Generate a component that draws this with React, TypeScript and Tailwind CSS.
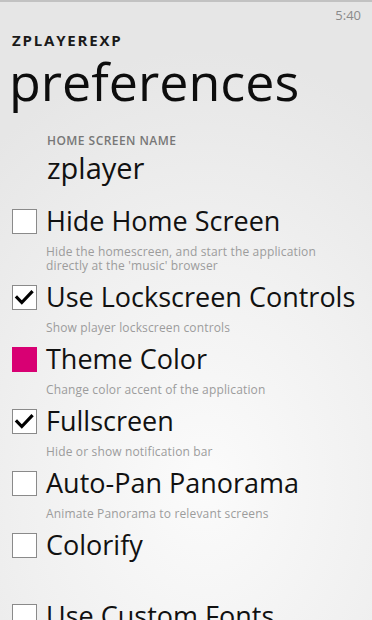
import React from "react";

const font = { fontFamily: '"Open Sans", "Noto Sans", sans-serif' };

function Check() {
  return (
    <svg width="25" height="25" viewBox="0 0 25 25" className="block">
      <polyline points="5,12.5 9.8,17.5 19.5,7.2" fill="none" stroke="#000" strokeWidth="3.2" strokeLinecap="square" strokeLinejoin="miter" />
    </svg>
  );
}

type Row = { title: string; desc?: string[]; kind: "on" | "off" | "color"; extra?: string };

const rows: Row[] = [
  { title: "Hide Home Screen", desc: ["Hide the homescreen, and start the application", "directly at the 'music' browser"], kind: "off" },
  { title: "Use Lockscreen Controls", desc: ["Show player lockscreen controls"], kind: "on" },
  { title: "Theme Color", desc: ["Change color accent of the application"], kind: "color" },
  { title: "Fullscreen", desc: ["Hide or show notification bar"], kind: "on" },
  { title: "Auto-Pan Panorama", desc: ["Animate Panorama to relevant screens"], kind: "off" },
  { title: "Colorify", kind: "off", extra: "pb-[39px]" },
  { title: "Use Custom Fonts", kind: "off" },
];

export default function App() {
  return (
    <div
      style={font}
      className="w-[372px] h-[620px] overflow-hidden bg-[radial-gradient(ellipse_90%_70%_at_55%_78%,#fbfbfb_0%,#f0f0f0_55%,#e6e6e6_100%)] text-[#111]"
    >
      <div className="h-[2px] bg-[#c2c2c2]" />
      <div className="flex justify-end pr-[11px] pt-[3px]">
        <span className="text-[13px] leading-[20px] text-[#8a8a8a]">5:40</span>
      </div>
      <div className="px-[12px]">
        <div className="mt-[6px] text-[15px] leading-[18px] font-bold tracking-[1.8px] text-[#1a1a1a]">ZPLAYEREXP</div>
        <div className="mt-[4px] ml-[-3px] text-[52px] leading-[56px] text-[#0d0d0d]">preferences</div>
        <div className="pl-[35px]">
          <div className="mt-[24px] text-[12px] leading-[16px] font-semibold tracking-[0.45px] text-[#777]">HOME SCREEN NAME</div>
          <div className="mt-[1px] text-[29px] leading-[36px] text-[#111]">zplayer</div>
        </div>
        <div className="mt-[19px] flex flex-col">
          {rows.map((r) => (
            <div key={r.title} className={`flex gap-[9px] pb-[8px] ${r.extra ?? ""}`}>
              <div className="pt-[4px] shrink-0">
                {r.kind === "color" ? (
                  <div className="w-[25px] h-[25px] bg-[#d80073]" />
                ) : (
                  <div className="w-[25px] h-[25px] bg-white border border-[#8a8a8a] box-border flex items-center justify-center">
                    {r.kind === "on" ? <div className="-m-[1px]"><Check /></div> : null}
                  </div>
                )}
              </div>
              <div className="flex flex-col">
                <div className="text-[27px] leading-[32px] text-[#111] whitespace-nowrap">{r.title}</div>
                {r.desc ? (
                  <div className="mt-[8px] text-[12px] leading-[14px] tracking-[0.15px] text-[#9c9c9c]">
                    {r.desc.map((d) => (
                      <div key={d} className="whitespace-nowrap">{d}</div>
                    ))}
                  </div>
                ) : null}
              </div>
            </div>
          ))}
        </div>
      </div>
    </div>
  );
}
